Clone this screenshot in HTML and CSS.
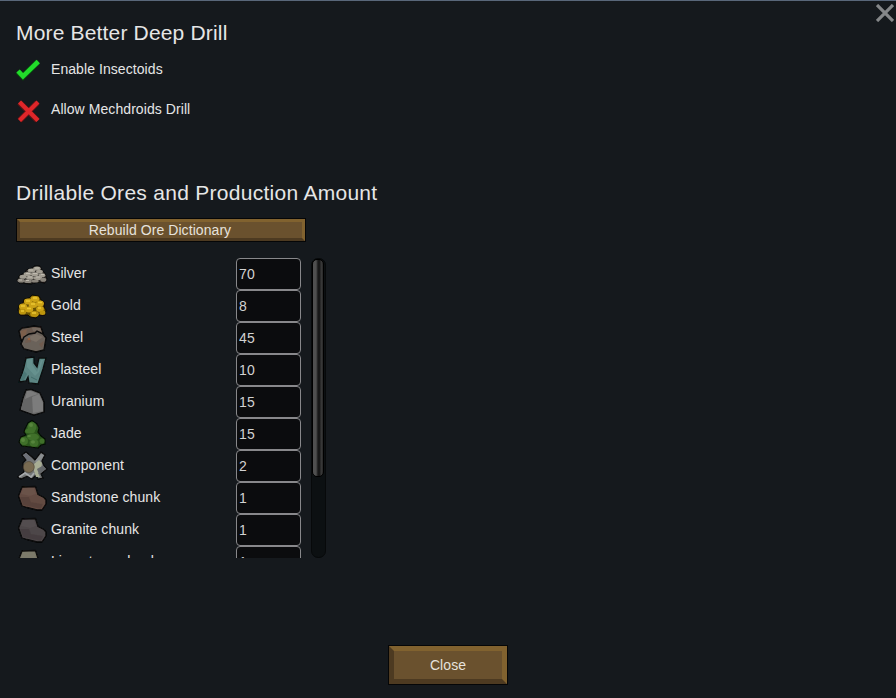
FILE: index.html
```
<!DOCTYPE html>
<html lang="en">
<head>
<meta charset="utf-8">
<title>More Better Deep Drill</title>
<link rel="stylesheet" href="styles.css">
</head>
<body>
<svg width="0" height="0" class="defs" aria-hidden="true">
  <defs>
    <filter id="soft"><feGaussianBlur stdDeviation=".45"/></filter>
    <symbol id="chunk" viewBox="0 0 32 32">
      <path d="M6 5 19.500 4.500 22 12.500 28 15.500 30 18 30 22 26 28 21 28 11 25.500 6 24 2.500 14Z" fill="currentColor" stroke="#080808" stroke-width="1.300" stroke-linejoin="round"/>
      <path d="M7 6 18 5.500 20 12 14 14 5 12Z" fill="#fff" opacity=".04"/>
      <path d="M4 15 13 15 15 20 27 22 25 27 7 23Z" fill="#000" opacity=".1"/>
    </symbol>
  </defs>
</svg>
<main class="window">
  <button class="dismiss" aria-label="Close window"><svg viewBox="0 0 18 18"><path d="M1 1 17 17M17 1 1 17"/></svg></button>
  <h1 class="heading title">More Better Deep Drill</h1>
  <div class="option">
    <svg viewBox="0 0 24 24"><path d="M2 12.500 7 17.500 22 2.800" fill="none" stroke="#0b4d10" stroke-width="6"/><path d="M2 12 7 17.300 22.300 2.500" fill="none" stroke="#20dc2b" stroke-width="4.600"/></svg>
    <span>Enable Insectoids</span>
  </div>
  <div class="option">
    <svg viewBox="0 0 24 24"><path d="M3.500 3.500 21.500 21.500M21.500 3.500 3.500 21.500" stroke="#611416" stroke-width="5.800"/><path d="M3.500 3 22 21.500M22 3 3.500 21.500" stroke="#df2829" stroke-width="4.200"/></svg>
    <span>Allow Mechdroids Drill</span>
  </div>
  <h2 class="heading ores-title">Drillable Ores and Production Amount</h2>
  <button class="btn rebuild">Rebuild Ore Dictionary</button>
  <section class="scroll">
    <div class="list">
      <div class="row"><svg viewBox="0 0 32 32">
        <path d="M1 22 4 17 9 15 10 12 16 10 18 8 24 8 26 12 29 15 31 21 29 25 22 24 15 26 3 25Z" fill="#2d2b28" stroke="#0c0c0c"/>
        <g fill="#a29d92"><ellipse cx="21" cy="10.500" rx="3.700" ry="2"/><ellipse cx="15.500" cy="12.500" rx="3.800" ry="2"/><ellipse cx="23.500" cy="13.700" rx="3.400" ry="1.900"/><ellipse cx="11.500" cy="16" rx="3.900" ry="2"/><ellipse cx="18.700" cy="16.300" rx="3.800" ry="2.100"/><ellipse cx="26" cy="17.300" rx="3.300" ry="2"/><ellipse cx="7" cy="18.700" rx="3.500" ry="2"/><ellipse cx="14" cy="19.700" rx="3.900" ry="2"/><ellipse cx="22" cy="20" rx="4.200" ry="2"/></g>
        <g fill="#8a857c"><ellipse cx="5" cy="22.600" rx="3.500" ry="2"/><ellipse cx="12" cy="23.200" rx="3.900" ry="1.900"/><ellipse cx="19.200" cy="23" rx="3.500" ry="1.500"/><ellipse cx="27.300" cy="21.700" rx="3" ry="2"/></g>
        <path d="M19 10H23M13 12H17M10 15.500H14M17 15.500H21M12 19H16M20 19H24M25 16.500H28M3 22H6M10 22.500H13" stroke="#c3beb3" stroke-width=".9"/></svg><span class="name">Silver</span><input value="70" aria-label="Silver"></div>
      <div class="row"><svg viewBox="0 0 32 32">
        <path d="M2 20 3 15 7 13 8 9 13 8 16 5 23 6 25 10 28 12 28 17 30 20 29 25 23 25 20 28 14 27 12 25 4 25Z" fill="#6b5206" stroke="#100d04"/>
        <g fill="#cda315"><ellipse cx="19" cy="9" rx="4.300" ry="3"/><ellipse cx="12" cy="11.500" rx="4" ry="2.900"/><ellipse cx="24" cy="13.500" rx="3.900" ry="2.900"/><ellipse cx="17" cy="15" rx="4.300" ry="3"/><ellipse cx="7" cy="16.500" rx="4" ry="3"/><ellipse cx="24" cy="19" rx="3.900" ry="3"/><ellipse cx="13" cy="19.500" rx="4.200" ry="2.900"/></g>
        <g fill="#bd950f"><ellipse cx="6.500" cy="21.700" rx="3.700" ry="2.900"/><ellipse cx="18.500" cy="24" rx="4.300" ry="3"/><ellipse cx="26.500" cy="22.700" rx="2.900" ry="2.200"/></g>
        <path d="M17 8H21M10 11H14M22 12.500H26M15 14H19M5 16H9M11 18.500H15M22 18H25M16 23H20M5 21H8" stroke="#ecc733" stroke-width="1.300"/></svg><span class="name">Gold</span><input value="8" aria-label="Gold"></div>
      <div class="row"><svg viewBox="0 0 32 32">
        <path d="M3 9 6 6 13 5 18 4 25 5 27 11 20 18 5 18Z" fill="#6a5a50" stroke="#080808" stroke-width="1.300"/>
        <path d="M5 9 11 7 10 13 5 16Z" fill="#7d5e4c"/><path d="M16 6 24 6 25 9 17 9Z" fill="#74695f"/>
        <path d="M8 15 13 12 19 11 21 9 27 12 30 16 28 28 20 30 8 27 5 22Z" fill="#6b625a" stroke="#080808" stroke-width="1.400"/>
        <path d="M10 16 20 12 27 15 20 20Z" fill="#7a6f65"/><path d="M10 17 14 15 15 20 9 21ZM23 22 28 19 26 26Z" fill="#735443" opacity=".5"/><circle cx="13" cy="17" r="1" fill="#a26139"/></svg><span class="name">Steel</span><input value="45" aria-label="Steel"></div>
      <div class="row"><svg viewBox="0 0 32 32">
        <path d="M10 4 18 3 18 9 21 13 23 4 30 4 27 15 22 30 13 29 12 23 10 27 3 28 6 20 8 13Z" fill="#5b8583" stroke="#0a1010" stroke-width="1.300"/>
        <path d="M11 5 16 4.500 16 10 21 18 25 6 27 6 23 18 19 22 11 13Z" fill="#709b98" opacity=".55"/><path d="M8 17 11 20 8 26 4 26Z" fill="#4b7775"/><path d="M15 23 21 26" stroke="#436d6b"/></svg><span class="name">Plasteel</span><input value="10" aria-label="Plasteel"></div>
      <div class="row"><svg viewBox="0 0 32 32">
        <path d="M10 4 15 3.500 24 7 28 16 28 26 18 29 4 24 7 12Z" fill="#686868" stroke="#080808" stroke-width="1.300"/>
        <path d="M11 5 15 4.500 17 11 16 27 5 23 8 13Z" fill="#656565"/><path d="M16 11 23 8 27 17 27 25 17 27Z" fill="#7b7b7b"/><path d="M11 5 15 5 22 8 16 10 9 13Z" fill="#858585" opacity=".7"/></svg><span class="name">Uranium</span><input value="15" aria-label="Uranium"></div>
      <div class="row"><svg viewBox="0 0 32 32">
        <path d="M9 11 12 5 16 2.500 21 6 23 10 22 14 25 18 29 21 29 26 25 27 22 30 15 29 6 28 3 24 5 19 10 17 8 14Z" fill="#2c551c" stroke="#071006" stroke-width="1.200"/>
        <g fill="#3f702a"><ellipse cx="16" cy="9" rx="4.500" ry="5"/><ellipse cx="14" cy="13" rx="5" ry="2.500"/><ellipse cx="17" cy="19" rx="6" ry="3.500"/><ellipse cx="8" cy="23" rx="4" ry="4"/><ellipse cx="18" cy="25" rx="4.500" ry="3.700"/><ellipse cx="26" cy="23" rx="2.500" ry="2.500"/></g>
        <g fill="#66934a" opacity=".6"><ellipse cx="15" cy="7" rx="2" ry="2"/><ellipse cx="7" cy="22" rx="2" ry="2"/><ellipse cx="17" cy="24" rx="2" ry="1.700"/><ellipse cx="13" cy="18" rx="2" ry="1"/></g></svg><span class="name">Jade</span><input value="15" aria-label="Jade"></div>
      <div class="row"><svg viewBox="0 0 32 32">
        <path d="M6 5 10 2 16 7 19 10 25 2 29 5 26 11 28 16 31 19 25 24 27 28 22 29 20 25 16 29 12 26 5 29 2 27 8 22 7 13 10 10Z" fill="#737575" stroke="#080808" stroke-width="1.200"/>
        <path d="M7 5 10 3 16 9 12 11Z" fill="#6d7078"/><path d="M19 11 25 4 28 5 22 15Z" fill="#8b8f91"/><path d="M18 14 23 10 26 13 25 20 29 19 22 23 24 27 20 27 18 21Z" fill="#a8ad94"/><path d="M21 19 27 15.500 30 19 23 24Z" fill="#65676b"/><path d="M3 27 9 23 12 25 15 27 18 23" fill="none" stroke="#a5a8aa" stroke-width="1.700"/>
        <circle cx="12.800" cy="17" r="5.500" fill="#786a51" stroke="#4b4336" stroke-width=".6"/></svg><span class="name">Component</span><input value="2" aria-label="Component"></div>
      <div class="row"><svg class="sandstone"><use href="#chunk"/></svg><span class="name">Sandstone chunk</span><input value="1" aria-label="Sandstone chunk"></div>
      <div class="row"><svg class="granite"><use href="#chunk"/></svg><span class="name">Granite chunk</span><input value="1" aria-label="Granite chunk"></div>
      <div class="row"><svg class="limestone"><use href="#chunk"/></svg><span class="name">Limestone chunk</span><input value="1" aria-label="Limestone chunk"></div>
    </div>
    <div class="track"><div class="thumb"></div></div>
  </section>
  <button class="btn close">Close</button>
</main>
</body>
</html>
```
FILE: styles.css
```
* { box-sizing: border-box; }
body {
  margin: 0;
  background: #15191d;
  color: #e6e6e6;
  font: 14px/20px "Liberation Sans", Arial, sans-serif;
  letter-spacing: .07px;
}
.defs { position: absolute; }
.window {
  position: relative;
  display: flex;
  flex-direction: column;
  height: 698px;
  padding: 17px 16px 0;
  border-top: 1px solid #59677a;
  overflow: hidden;
}
.dismiss {
  position: absolute;
  top: 3px;
  right: 2px;
  width: 18px;
  height: 18px;
  padding: 0;
  border: 0;
  background: none;
}
.dismiss svg { display: block; width: 18px; height: 18px; stroke: #858789; stroke-width: 3.2; }
.heading {
  margin: 0 0 6px;
  height: 30px;
  font-size: 21px;
  line-height: 30px;
  font-weight: normal;
  letter-spacing: .28px;
}
.title { letter-spacing: .17px; }
.option { display: flex; height: 32px; margin-bottom: 8px; line-height: 30px; }
.option svg { width: 24px; height: 24px; margin: 5px 11px 0 0; filter: url(#soft); }
.ores-title { margin-top: 44px; margin-bottom: 11px; }
.btn {
  padding: 0;
  color: #e6e2dc;
  font: inherit;
  letter-spacing: inherit;
  background: #6a512e;
  border: solid;
  border-color: #81622f #81622f #4d3a21 #4d3a21;
  outline: 1px solid #050607;
}
.rebuild { width: 288px; height: 22px; margin-left: 1px; padding-right: 2px; border-width: 3px; line-height: 16px; flex: none; }
.scroll { display: flex; height: 300px; margin-top: 17px; overflow: hidden; flex: none; }
.list { width: 285px; height: 300px; overflow: hidden; }
.row { display: flex; height: 32px; }
.row svg { width: 32px; height: 32px; filter: url(#soft); }
.name { flex: 1; padding-left: 3px; line-height: 30px; }
.row input {
  width: 65px;
  height: 32px;
  padding: 0 2px;
  border: 1px solid #88888b;
  border-radius: 4px;
  background: #0b0c0e;
  color: #d2d2d2;
  font: inherit;
  letter-spacing: .2px;
  outline: 0;
}
.sandstone { color: #644b42; }
.granite { color: #4d4648; }
.limestone { color: #777564; }
.track {
  width: 15px;
  height: 300px;
  margin-left: 10px;
  padding: 1px;
  border-radius: 7px;
  background: #0c1012;
  border: 1px solid #07090a;
}
.thumb {
  height: 218px;
  margin-top: -1px;
  margin-left: -1px;
  border-radius: 5px;
  border: 1px solid #000;
  background: linear-gradient(90deg, #4f4f4f 0 3px, #353535 4px, #171717 5px 7px, #3c3c3c 8px, #272727);
}
.close { align-self: center; width: 118px; height: 38px; margin-top: 88px; padding-bottom: 1px; border-width: 5px; flex: none; }
```
